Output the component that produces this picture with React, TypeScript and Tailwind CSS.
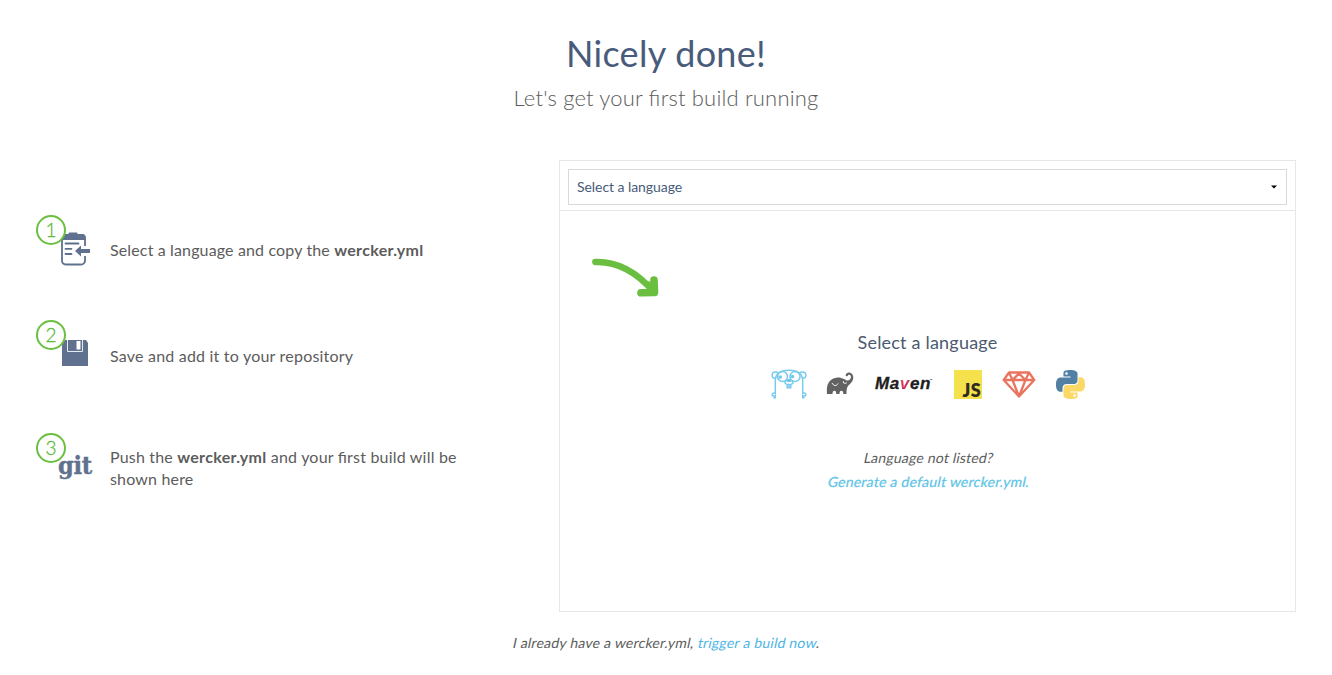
import type { ReactNode } from "react";

function ClipboardIcon() {
  return (
    <svg width="31" height="34" viewBox="0 0 31 34" fill="none">
      <path d="M25 14V6a3 3 0 0 0-3-3H5a3 3 0 0 0-3 3v23a3.500 3.500 0 0 0 3.500 3.500H20.500A4 4 0 0 0 25 28v-4" stroke="#5f718e" strokeWidth="1.800" />
      <path d="M1.500 8V5a3 3 0 0 1 3-3h4V1.500Q8.500.5 9.500.5h7q1 0 1 1V2h4a4 4 0 0 1 4 3v3Z" fill="#5f718e" />
      <path d="M5.500 11.500h13M5.500 16.800h6M5.500 22h6" stroke="#5f718e" strokeWidth="1.800" strokeLinecap="round" />
      <path d="m15 19 6-5.500v3.400h9v4H21v3.600Z" fill="#5f718e" />
    </svg>
  );
}

function DiskIcon() {
  return (
    <svg width="26" height="26" viewBox="0 0 26 26">
      <path d="M0 0h24l2 3v23H0Z" fill="#5f718e" />
      <path d="M5.500 0v11.500h15V0" fill="none" stroke="#e8ebf0" strokeWidth="1" />
      <path d="M14.500 1h4v8.500h-4Z" fill="#fff" />
    </svg>
  );
}

function Step({ n, icon, children }: { n: number; icon: ReactNode; children: ReactNode }) {
  return (
    <li className="flex">
      <div className="relative h-[52px] w-[74px] shrink-0">
        <span className="absolute z-10 flex h-[30px] w-[30px] items-center justify-center rounded-full border-2 border-[#6abf40] bg-white pb-[2px] text-[19px] font-light leading-none text-[#5dbb3a] [-webkit-text-stroke:0.300px_#5dbb3a]">
          {n}
        </span>
        {icon}
      </div>
      {children}
    </li>
  );
}

function Arrow() {
  return (
    <svg width="68" height="40" viewBox="0 0 68 40" fill="none" stroke="#6abf40" strokeLinecap="round" strokeLinejoin="round">
      <path d="M4.300 4C30 3 48 17 62 33" strokeWidth="6.400" />
      <path d="M63 22 63.500 34.500 50 34.800" strokeWidth="7.600" />
      <path d="M58 27 62 34" strokeWidth="7" />
    </svg>
  );
}

function Gopher() {
  return (
    <svg width="36" height="30" viewBox="0 0 36 30" fill="none" stroke="#78cbed" strokeWidth="1.500">
      <path d="M4.300 25V12C4.300 5 8 1.200 18 1.200S31.700 5 31.700 12v13" />
      <path d="M5 9.200C1.500 9.500.8 7.500 1.200 5.500 1.600 3 5 2 7.500 4M31 9.200c3.500.3 4.200-1.700 3.800-3.700-.4-2.500-3.800-3.500-6.300-1.500" />
      <circle cx="11.500" cy="7.500" r="5" />
      <circle cx="24" cy="7.500" r="5" />
      <circle cx="9.200" cy="8" r="1.100" fill="#438eb0" />
      <circle cx="21.500" cy="7.500" r="1.100" fill="#438eb0" />
      <path d="M14 13.500c0-2 2-2 4-2s4 0 4 2-2 2-4 2-4 0-4-2Zm2.200 2v3.200h3.600v-3.200M18 15.500v3" />
      <ellipse cx="18" cy="11.400" rx="1.700" ry="1" fill="#438eb0" />
      <path d="M4.300 24c-3-.5-3.300 1-3 2.300.4 1.400 2.500.7 3 .2v2.300H2.500M31.700 24c3-.5 3.300 1 3 2.300-.4 1.400-2.500.7-3 .2v2.300h1.800" />
    </svg>
  );
}

function Elephant() {
  return (
    <svg width="28" height="24" viewBox="0 0 28 24">
      <path d="M1 22C.5 16 1 11 5 8c3-3 9-3.500 13-1 2 1.400 4 2.200 5.700.7 1.500-1.300 1.800-4 .3-4.800-1-.6-2 0-2.300.8-.5 1-2.200.6-2-.6.3-2 2.500-3 4.500-2.300 3.500 1.200 4 6 1.500 9.200-1.400 2-2.600 2.500-3.700 4-1.300 1.800-1.500 5-1.500 8h-3.200c0-2-.7-3.200-1.900-3.200s-1.900 1.200-1.900 3.200h-3.200c0-2-.7-3.200-1.900-3.200S6.500 20 6.500 22Z" fill="#626262" />
      <path d="M6 11c1.500 3 4.500 3.500 6 .5M17 10.200c1 1.300 2.500 1.500 3.800.5" fill="none" stroke="#fff" strokeWidth="1" />
      <circle cx="17.500" cy="10" r=".7" fill="#fff" />
    </svg>
  );
}

function Maven() {
  return (
    <span className="relative block h-[24px] w-[60px] whitespace-nowrap font-['Liberation_Sans',sans-serif] text-[17px] font-bold italic leading-[24px] tracking-[0.600px] text-[#202020] [-webkit-text-stroke:0.300px_#202020]">
      Ma<span className="bg-linear-to-br from-[#f26b37] via-[#d82b58] to-[#853b90] bg-clip-text text-transparent [-webkit-text-stroke:0]">v</span>en
      <span className="absolute right-0 top-[4px] text-[3px] leading-[8px] not-italic [-webkit-text-stroke:0]">™</span>
    </span>
  );
}

function JavaScript() {
  return (
    <div className="flex h-[29px] w-[28px] items-end justify-end bg-[#f5e14c] pr-[1px] font-['Lato',sans-serif] text-[18px] font-extrabold leading-[18px] tracking-[0.300px] text-[#302d20]">
      JS
    </div>
  );
}

function Ruby() {
  return (
    <svg width="34" height="27" viewBox="0 0 34 27" fill="none" stroke="#ea7460" strokeWidth="2.300" strokeLinejoin="round">
      <path d="M7 1.500h20L32.300 9 17 25.500 1.700 9ZM1.700 9h30.600M7 1.500 10.500 9 17 25.500 23.500 9 27 1.500M10.500 9 17 2.500l6.500 6.500" />
    </svg>
  );
}

const snake =
  "M14.25.18l.9.2.73.26.59.3.45.32.34.34.25.34.16.33.1.3.04.26.02.2-.01.13V8.5l-.05.63-.13.55-.21.46-.26.38-.3.31-.33.25-.35.19-.35.14-.33.1-.3.07-.26.04-.21.02H8.77l-.69.05-.59.14-.5.22-.41.27-.33.32-.27.35-.2.36-.15.37-.1.35-.07.32-.04.27-.02.21v3.06H3.17l-.21-.03-.28-.07-.32-.12-.35-.18-.36-.26-.36-.36-.35-.46-.32-.59-.28-.73-.21-.88-.14-1.05-.05-1.23.06-1.22.16-1.04.24-.87.32-.71.36-.57.4-.44.42-.33.42-.24.4-.16.36-.1.32-.05.24-.01h.16l.06.01h8.16v-.83H6.18l-.01-2.75-.02-.37.05-.34.11-.31.17-.28.25-.26.31-.23.38-.2.44-.18.51-.15.58-.12.64-.1.71-.06.77-.04.84-.02 1.27.05zm-6.3 1.98l-.23.33-.08.41.08.41.23.34.33.22.41.09.41-.09.33-.22.23-.34.08-.41-.08-.41-.23-.33-.33-.22-.41-.09-.41.09z";

function Python() {
  return (
    <svg width="29" height="29" viewBox="0 0 24 24">
      <path d={snake} fill="#5280a5" />
      <path d={snake} fill="#fcd966" transform="rotate(180 12 12)" />
    </svg>
  );
}

export default function App() {
  return (
    <main className="h-[675px] overflow-hidden bg-white font-['Lato',sans-serif] text-[#5c5c5c] [font-feature-settings:'liga']">
      <header className="h-[160px] pt-[29px] text-center">
        <h1 className="text-[36px] leading-[48px] tracking-[0.300px] text-[#485b7b]">Nicely done!</h1>
        <p className="mt-[9px] text-[22px] font-light leading-[24px] tracking-[0.170px]">Let's get your first build running</p>
      </header>

      <div className="flex h-[452px] justify-between pl-[36px] pr-[36px]">
        <ol className="flex w-[440px] flex-col pt-[55px] text-[16px] leading-[22px] tracking-[0.170px]">
          <Step n={1} icon={<div className="absolute left-[24px] top-[17px]"><ClipboardIcon /></div>}>
            <p className="pt-[24px] tracking-[0.140px]">Select a language and copy the <b className="tracking-[0.330px]">wercker.yml</b></p>
          </Step>
          <li className="h-[53px]" aria-hidden />
          <Step n={2} icon={<div className="absolute left-[26px] top-[20px]"><DiskIcon /></div>}>
            <p className="pt-[25px] tracking-[0.210px]">Save and add it to your repository</p>
          </Step>
          <li className="h-[61px]" aria-hidden />
          <Step n={3} icon={<div className="absolute left-[22px] top-[18px] font-['DejaVu_Serif_Condensed','DejaVu_Serif',serif] text-[25px] font-bold leading-[30px] tracking-[-0.300px] text-[#5f718e] [-webkit-text-stroke:0.400px_#5f718e]">git</div>}>
            <p className="pt-[13px]">
              <span className="block">Push the <b className="tracking-[0.330px]">wercker.yml</b><span className="tracking-[0.200px]"> and your first build will be</span></span>
              <span className="block">shown here</span>
            </p>
          </Step>
        </ol>

        <section className="flex h-[452px] w-[737px] flex-col border border-[#e7e7e7]">
          <div className="h-[50px] border-b border-[#e7e7e7] p-[8px]">
            <button className="flex h-[36px] w-full items-center justify-between border border-[#d9d9d9] px-[8px] text-[14px] tracking-[-0.060px] text-[#485b7b]">
              <span className="pb-[2px]">Select a language</span>
              <svg className="mr-px" width="6" height="4" viewBox="0 0 6 4"><path d="M0 .5h6l-3 3Z" fill="#000" /></svg>
            </button>
          </div>
          <div className="h-[87px] pl-[31px] pt-[47px]"><Arrow /></div>
          <div className="flex flex-col items-center pt-[31px] text-center">
            <h2 className="text-[18px] leading-[26px] tracking-[0.200px] text-[#4b5a70]">Select a language</h2>
            <div className="mt-[13px] flex h-[32px] items-center pl-px">
              <Gopher />
              <span className="ml-[19px]"><Elephant /></span>
              <span className="ml-[19px]"><Maven /></span>
              <span className="ml-[21px]"><JavaScript /></span>
              <span className="ml-[20px]"><Ruby /></span>
              <span className="ml-[20px]"><Python /></span>
            </div>
            <p className="mt-[46px] flex flex-col items-center pl-[2px] text-[14px] leading-[24px] tracking-[0.200px]">
              <span className="block -skew-x-12">Language not listed?</span>
              <a className="block -skew-x-12 font-medium tracking-[0.220px] text-[#63c5e7] [-webkit-text-stroke:0.150px_#63c5e7]">Generate a default wercker.yml.</a>
            </p>
          </div>
        </section>
      </div>
      <p className="mt-[20px] flex justify-center pl-px text-[14px] leading-[22px] tracking-[0.230px]">
        <span className="block -skew-x-12">I already have a wercker.yml, <a className="text-[#4cb5e5]">trigger a build now</a>.</span>
      </p>
    </main>
  );
}
